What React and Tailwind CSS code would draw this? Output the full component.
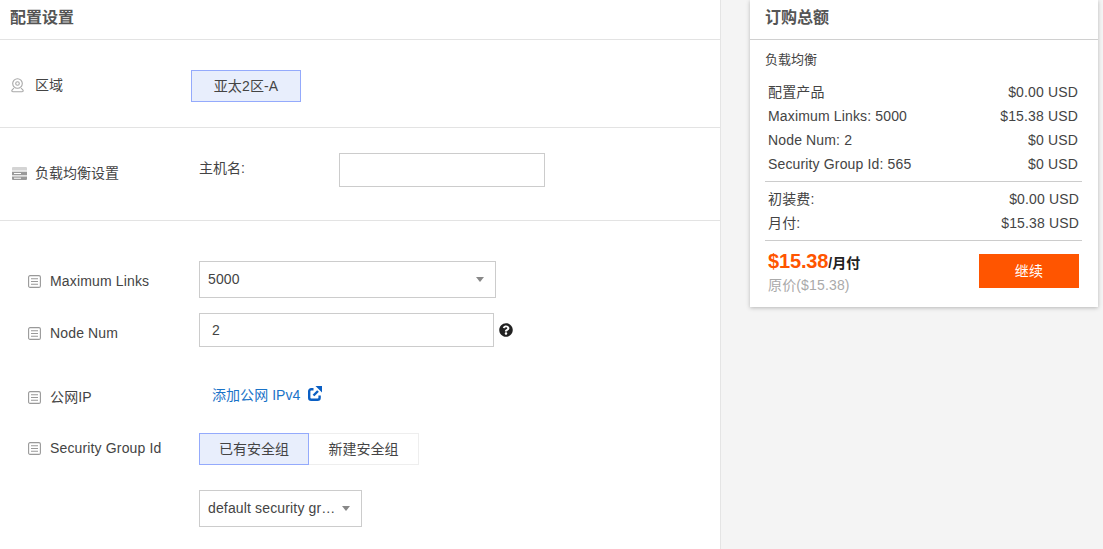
import React from 'react';
import { FaQuestionCircle } from 'react-icons/fa';

const Caret = () => (
  <span className="w-0 h-0 border-x-[4px] border-x-transparent border-t-[5px] border-t-[#888]" />
);

const PinIcon = () => (
  <svg width="13" height="15" viewBox="0 0 13 15" fill="none" stroke="#a8a8a8" strokeWidth="1.1">
    <circle cx="6.5" cy="5.5" r="4.8" />
    <circle cx="6.5" cy="5.5" r="1.8" />
    <path d="M3 10 1 12.2c-.5.8 0 1.6 1 1.6h9c1 0 1.5-.8 1-1.6L10 10" />
  </svg>
);

const ServerIcon = () => (
  <svg width="15" height="13" viewBox="0 0 15 13">
    <path d="M1 0h13a1 1 0 0 1 1 1v2.5H0V1a1 1 0 0 1 1-1z" fill="#d4d4d4" />
    <path d="M0 4.7h15v3.6H0z" fill="#9a9a9a" />
    <path d="M0 9.5h15V12a1 1 0 0 1-1 1H1a1 1 0 0 1-1-1z" fill="#9a9a9a" />
    <rect x="2" y="6" width="7" height="1" fill="#fff" />
    <rect x="2" y="10.7" width="7" height="1" fill="#fff" />
  </svg>
);

const ListIcon = () => (
  <svg width="13" height="13" viewBox="0 0 13 13" fill="none" stroke="#999" strokeWidth="1.1">
    <rect x="0.6" y="0.6" width="11.8" height="11.8" rx="1.5" />
    <path d="M3 3.7h7M3 6.5h7M3 9.3h7" />
  </svg>
);

const LinkOutIcon = () => (
  <svg width="14" height="15" viewBox="0 0 14 15" fill="none" className="ml-[8px] -mt-[3px] shrink-0">
    <path d="M5.5 3.2H3.2A2 2 0 0 0 1.2 5.2v6.6a2 2 0 0 0 2 2h6.4a2 2 0 0 0 2-2V9.5" stroke="#0a5fc4" strokeWidth="2.4" />
    <path d="M5.5 9.5 10 5" stroke="#0a5fc4" strokeWidth="2.4" />
    <path d="M7.5 0H14v6.5z" fill="#0a5fc4" />
  </svg>
);

const FormRow = ({ label, labelClass, className, children }) => (
  <div className={`flex items-start ${className}`}>
    <div className={`w-[171px] flex items-center gap-[9px] shrink-0 ${labelClass}`}>
      <ListIcon />
      <span>{label}</span>
    </div>
    {children}
  </div>
);

const PriceRow = ({ name, price }) => (
  <div className="flex justify-between h-6 items-center pl-[3px] pr-[3px]">
    <span>{name}</span>
    <span>{price}</span>
  </div>
);

export default function App() {
  return (
    <div
      className="h-[549px] overflow-hidden flex bg-[#f4f4f4] text-[14px] tracking-[0.15px] text-[#444]"
      style={{ fontFamily: '"Liberation Sans", "Noto Sans CJK SC", sans-serif' }}
    >
      {/* config panel */}
      <div className="w-[721px] shrink-0 bg-white border-r border-[#e4e4e4]">
        <div className="h-10 border-b border-[#e3e3e3] pl-[10px] pt-[7px] text-[16px] tracking-normal leading-[22px] font-bold text-[#555]">
          配置设置
        </div>

        <div className="h-[88px] border-b border-[#e3e3e3] flex items-start pl-[11px]">
          <div className="w-[180px] flex items-center gap-[12px] pt-[37px] leading-[16px]">
            <PinIcon />
            <span className="-ml-px tracking-normal">区域</span>
          </div>
          <div className="mt-[30px] w-[110px] h-8 bg-[#e8eefc] border border-[#94aafc] flex items-center justify-center">
            亚太2区-A
          </div>
        </div>

        <div className="h-[93px] border-b border-[#e3e3e3] flex items-start pl-[12px]">
          <div className="w-[187px] flex items-center gap-[8px] pt-[37px] leading-[16px]">
            <ServerIcon />
            <span className="tracking-normal">负载均衡设置</span>
          </div>
          <div className="w-[140px] pt-[32px] leading-[16px] tracking-normal">主机名:</div>
          <div className="mt-[25px] w-[206px] h-[34px] border border-[#ccc]" />
        </div>

        <div className="pl-7">
          <FormRow label="Maximum Links" className="mt-10" labelClass="pt-[12px] leading-[16px]">
            <div className="w-[297px] h-[37px] border border-[#ccc] flex items-center justify-between pl-2 pr-[11px]">
              <span>5000</span>
              <Caret />
            </div>
          </FormRow>

          <FormRow label="Node Num" className="mt-[15px]" labelClass="pt-[12px] leading-[16px]">
            <div className="w-[295px] h-[34px] border border-[#ccc] flex items-center pl-3">2</div>
            <FaQuestionCircle className="ml-[5px] mt-[10px] text-[#222]" size={14} />
          </FormRow>

          <FormRow label="公网IP" className="mt-[42px]" labelClass="leading-[16px]">
            <div className="pl-[13px] flex items-center text-[#1a73c8] leading-[16px] -mt-[2px]">
              <span className="tracking-[0.05px]">添加公网 IPv4</span>
              <LinkOutIcon />
            </div>
          </FormRow>

          <FormRow label="Security Group Id" className="mt-[28px]" labelClass="pt-[7px] leading-[16px]">
            <div className="flex tracking-normal">
              <div className="w-[110px] h-8 bg-[#e8eefc] border border-[#94aafc] flex items-center justify-center">
                已有安全组
              </div>
              <div className="w-[110px] h-8 border border-l-0 border-[#eee] flex items-center justify-center">
                新建安全组
              </div>
            </div>
          </FormRow>

          <div className="ml-[171px] mt-[25px] w-[163px] h-[37px] border border-[#ccc] flex items-center justify-between pl-2 pr-[11px]">
            <span>default security gr…</span>
            <Caret />
          </div>
        </div>
      </div>

      {/* order summary */}
      <div className="ml-[29px] w-[348px] h-[307px] bg-white shadow-[0_1px_4px_rgba(0,0,0,0.25)]">
        <div className="h-10 border-b border-[#d0d0d0] pl-[15px] pt-[7px] text-[16px] tracking-normal leading-[22px] font-bold text-[#555]">
          订购总额
        </div>
        <div className="pl-[15px] pr-4">
          <div className="h-[40px] pt-3 text-[13px] tracking-normal leading-[16px]">负载均衡</div>
          <div className="pb-[5px] pr-px border-b border-[#ccc]">
            <PriceRow name="配置产品" price="$0.00 USD" />
            <PriceRow name="Maximum Links: 5000" price="$15.38 USD" />
            <PriceRow name="Node Num: 2" price="$0 USD" />
            <PriceRow name="Security Group Id: 565" price="$0 USD" />
          </div>
          <div className="pt-[5px] pb-[5px] border-b border-[#ccc]">
            <PriceRow name="初装费:" price="$0.00 USD" />
            <PriceRow name="月付:" price="$15.38 USD" />
          </div>
          <div className="flex justify-between pl-[3px] pr-[3px]">
            <div>
              <div className="pt-[8px] leading-[24px] tracking-normal">
                <span className="text-[20px] tracking-[-0.15px] font-bold text-[#ff5500]">$15.38</span>
                <span className="font-bold text-[#222]">/月付</span>
              </div>
              <div className="text-[#aaa] leading-[20px]">原价($15.38)</div>
            </div>
            <div className="mt-[13px] w-[100px] h-[34px] bg-[#ff5500] text-white flex items-center justify-center">
              继续
            </div>
          </div>
        </div>
      </div>
    </div>
  );
}
